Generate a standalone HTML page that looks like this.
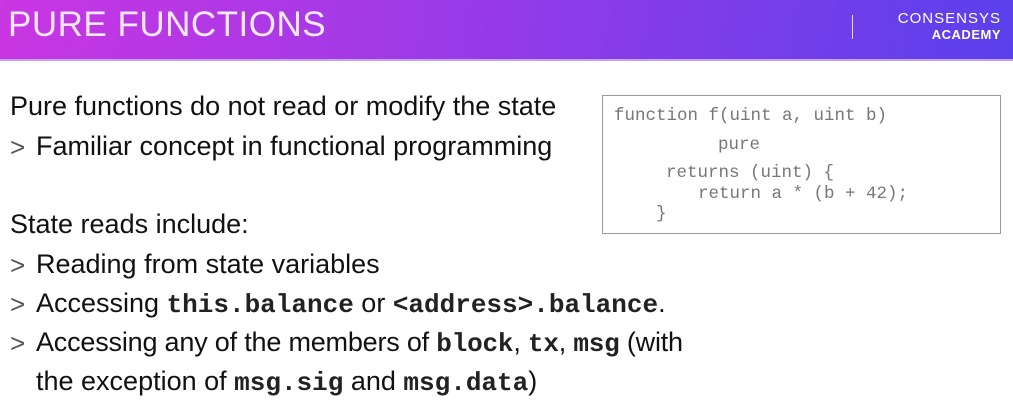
<!DOCTYPE html>
<html><head><meta charset="utf-8"><style>
body{margin:0;width:1013px;height:415px;background:#fff;overflow:hidden;position:relative;font-family:"Liberation Sans",sans-serif;color:#111}
.hdr{position:absolute;left:0;top:0;width:1013px;height:59px;background:linear-gradient(100deg,#c936e2 0%,#9a3ae8 45%,#5a40ec 100%);border-bottom:2px solid #c7a0ee}
.title{position:absolute;left:8px;top:5px;font-size:35px;color:#f4e8ff;font-weight:normal;letter-spacing:0.5px}
.sep{position:absolute;left:852px;top:15px;width:1px;height:24px;background:#e8d8f8}
.l1{position:absolute;right:12px;top:10px;color:#fff;font-size:15px;letter-spacing:1px}
.l2{position:absolute;right:12px;top:27px;color:#fff;font-size:13px;font-weight:bold;letter-spacing:0.5px}
.t{position:absolute;left:10px;font-size:27px;white-space:nowrap}
.b{position:absolute;left:10px;font-size:26px;color:#555}
code{font-family:"Liberation Mono",monospace;font-weight:bold;font-size:26px;color:#222}
.box{position:absolute;left:602px;top:95px;width:399px;height:139px;border:1px solid #999;box-sizing:border-box}
.c{position:absolute;font-family:"Liberation Mono",monospace;font-size:17.5px;color:#777;white-space:pre}
</style></head><body>
<div class="hdr">
<div class="title">PURE FUNCTIONS</div>
<div class="sep"></div>
<div class="l1">CONSENSYS</div>
<div class="l2">ACADEMY</div>
</div>
<div class="t" style="top:91px">Pure functions do not read or modify the state</div>
<div class="b" style="top:132px">&gt;</div><div class="t" style="left:36px;top:131px">Familiar concept in functional programming</div>
<div class="t" style="top:209px">State reads include:</div>
<div class="b" style="top:250px">&gt;</div><div class="t" style="left:36px;top:249px">Reading from state variables</div>
<div class="b" style="top:289px">&gt;</div><div class="t" style="left:36px;top:288px">Accessing <code>this.balance</code> or <code>&lt;address&gt;.balance</code>.</div>
<div class="b" style="top:328px">&gt;</div><div class="t" style="left:36px;top:327px;letter-spacing:-0.2px">Accessing any of the members of <code>block</code>, <code>tx</code>, <code>msg</code> (with</div>
<div class="t" style="left:36px;top:366px">the exception of <code>msg.sig</code> and <code>msg.data</code>)</div>
<div class="box"></div>
<div class="c" style="left:614px;top:106px">function f(uint a, uint b)</div>
<div class="c" style="left:718px;top:135px">pure</div>
<div class="c" style="left:666px;top:163px">returns (uint) {</div>
<div class="c" style="left:698px;top:184px">return a * (b + 42);</div>
<div class="c" style="left:656px;top:204px">}</div>
</body></html>
